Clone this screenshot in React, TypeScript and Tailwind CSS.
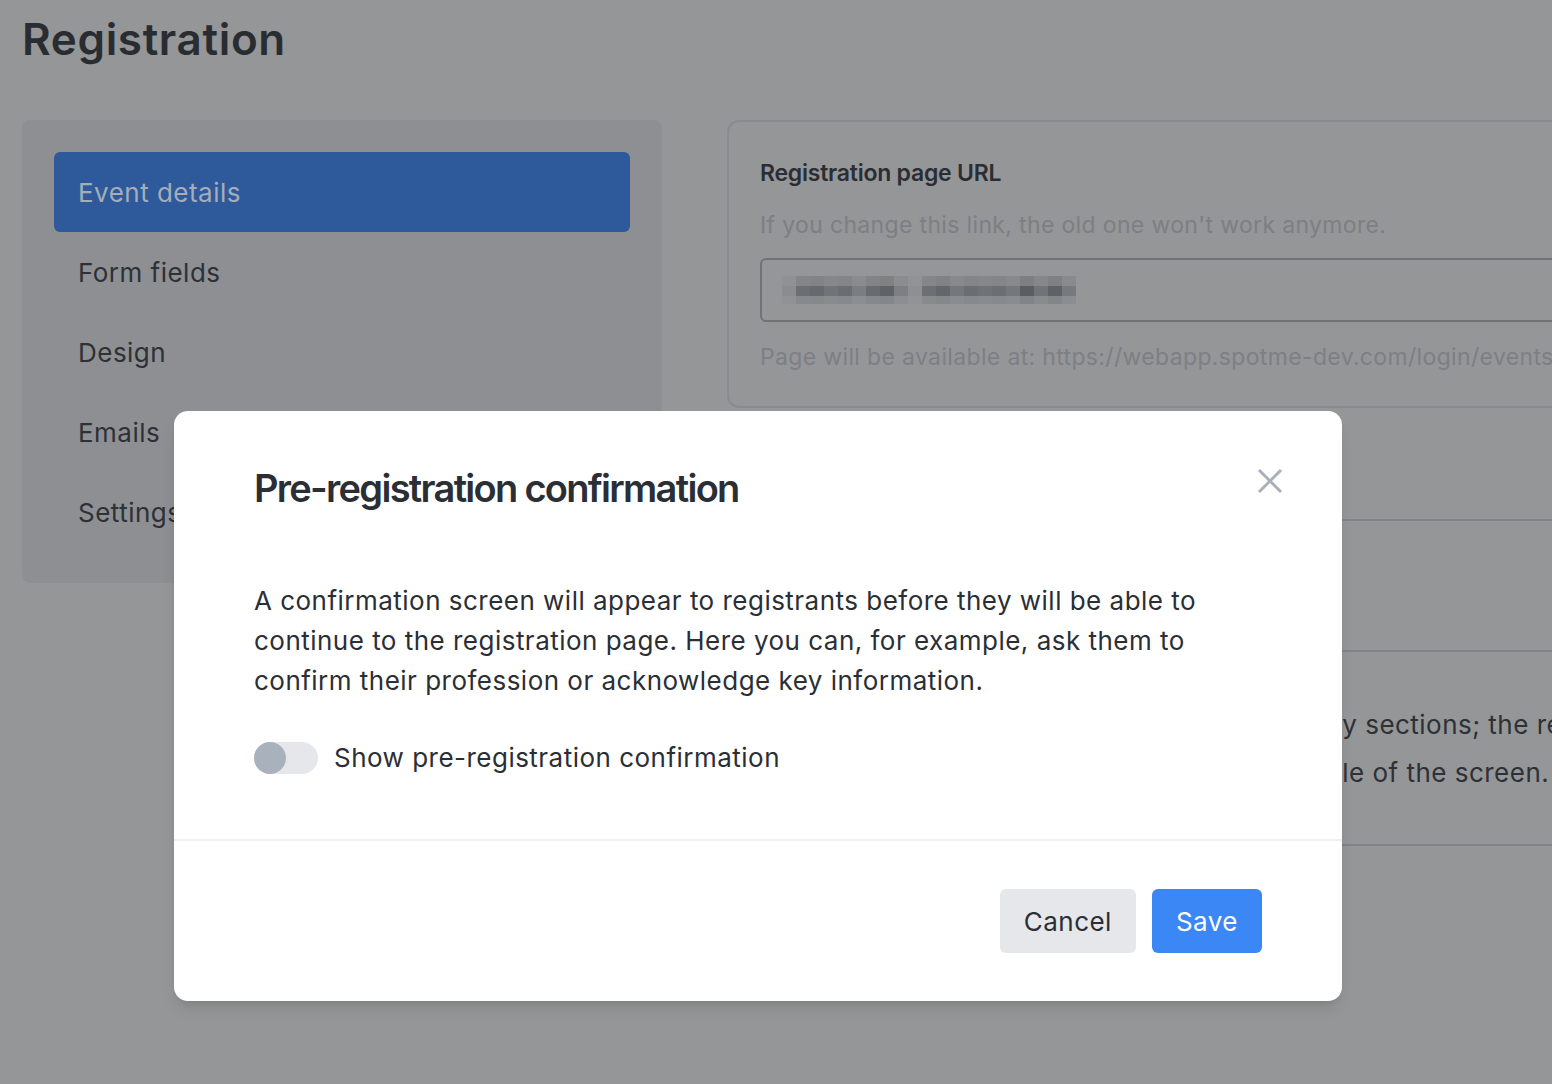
import React from "react";

const sideItems = ["Event details", "Form fields", "Design", "Emails", "Settings"];

// pixelated (blurred) slug inside the URL input
const blur = [
  "#8a8c90", "#6b6e72", "#66696d", "#707377", "#6a6d71", "#7a7d81", "#686b6f", "#5f6266", "#7c7f83", "#8d8f93",
  "#6c6f73", "#63666a", "#74777b", "#6a6d71", "#6f7276", "#6b6e72", "#74777b", "#5a5d61", "#707377", "#5e6165", "#76797d",
];

export default function App() {
  return (
    <div
      className="relative h-[1084px] w-[1552px] overflow-hidden bg-[#959698] tracking-[0.03em] text-[#2d3136]"
      style={{ fontFamily: "Inter, 'Noto Sans', sans-serif" }}
    >
      {/* Page (dimmed behind modal) */}
      <div className="px-[22px]">
        <h1 className="mt-[10px] text-[44px] leading-[58px] font-semibold tracking-[0.015em] text-[#292d32]">
          Registration
        </h1>

        <div className="mt-[52px] flex items-start gap-[65px]">
          {/* Sidebar */}
          <div className="w-[640px] shrink-0 rounded-lg bg-[#8e8f93] px-8 pt-8 pb-[31px]">
            {sideItems.map((item, i) => (
              <div
                key={item}
                className={
                  i === 0
                    ? "flex h-20 items-center rounded-md bg-[#2e5a9b] px-6 text-[26px] text-[#a5adb9]"
                    : "flex h-20 items-center px-6 text-[26px] text-[#2d3136]"
                }
              >
                {item}
              </div>
            ))}
          </div>

          {/* Right column */}
          <div className="min-w-[900px] flex-1">
            <div className="rounded-xl border-2 border-[#8a8b8e] px-[31px] pt-[35px] pb-[33px]">
              <div className="text-[23px] font-semibold leading-8 tracking-[-0.01em] text-[#2a2e33]">
                Registration page URL
              </div>
              <div className="mt-5 text-[23px] leading-8 tracking-[0.015em] text-[#7c7f84]">
                If you change this link, the old one won't work anymore.
              </div>
              <div className="mt-[17px] flex h-[64px] w-[900px] items-center rounded-md border-2 border-[#6f7378] px-5">
                <div className="flex flex-col">
                  <div className="flex h-[10px] opacity-40">
                    {blur.map((c, i) => (
                      <span key={i} className="h-[10px] w-[14px]" style={{ background: c }} />
                    ))}
                  </div>
                  <div className="flex h-[10px]">
                    {blur.map((c, i) => (
                      <span key={i} className="h-[10px] w-[14px]" style={{ background: c }} />
                    ))}
                  </div>
                  <div className="flex h-[8px] opacity-30">
                    {blur.map((c, i) => (
                      <span key={i} className="h-[8px] w-[14px]" style={{ background: c }} />
                    ))}
                  </div>
                </div>
              </div>
              <div className="mt-[19px] whitespace-nowrap text-[23px] leading-8 tracking-[0.015em] text-[#7c7f84]">
                Page will be available at: https://webapp.spotme-dev.com/login/events
              </div>
            </div>

            <div className="h-[113px] border-b-2 border-[#838487]" />
            <div className="h-[131px] border-b-2 border-[#838487]" />
            <div className="flex h-[194px] flex-col border-b-2 border-[#838487] pt-[49px]">
              <p className="whitespace-nowrap pl-[38px] text-[26px] leading-[48px] text-[#2d3136]">
                Choose if the form is displayed in one or many sections; the rest
              </p>
              <p className="whitespace-nowrap pl-[29px] text-[26px] leading-[48px] text-[#2d3136]">
                will all be shown one after another in the middle of the screen.
              </p>
            </div>
          </div>
        </div>
      </div>

      {/* Modal */}
      <div className="absolute top-[411px] left-[174px] w-[1168px] rounded-[14px] bg-white shadow-lg">
        <div className="px-20 pt-[53px] pb-[61px]">
          <div className="flex items-start justify-between">
            <h2 className="text-[38px] font-semibold leading-[48px] tracking-[-0.045em] text-[#2b2f35]">
              Pre-registration confirmation
            </h2>
            <button className="mt-[-3px] mr-[-28px] flex h-10 w-10 items-center justify-center text-[#a9b0b9]">
              <svg width="26" height="26" viewBox="0 0 26 26" fill="none" stroke="currentColor" strokeWidth="3">
                <path d="M2 2 L24 24 M24 2 L2 24" />
              </svg>
            </button>
          </div>
          <p className="mt-[69px] text-[26px] leading-10 text-[#2b2f35]">
            A confirmation screen will appear to registrants before they will be able to continue to the
            registration page. Here you can, for example, ask them to confirm their profession or acknowledge
            key information.
          </p>
          <div className="mt-[37px] flex h-10 items-center gap-4">
            <div className="flex h-8 w-16 items-center rounded-full bg-[#e5e7eb]">
              <div className="h-8 w-8 rounded-full bg-[#a9b1bc]" />
            </div>
            <span className="text-[26px] leading-10 text-[#2b2f35]">Show pre-registration confirmation</span>
          </div>
        </div>
        <div className="flex justify-end gap-4 border-t-2 border-[#eef0f2] px-20 pt-[48px] pb-[48px]">
          <button className="h-16 rounded-md bg-[#e5e7ea] px-6 text-[26px] text-[#2b2f35]">Cancel</button>
          <button className="h-16 rounded-md bg-[#3a87f5] px-6 text-[26px] text-white">Save</button>
        </div>
      </div>
    </div>
  );
}
